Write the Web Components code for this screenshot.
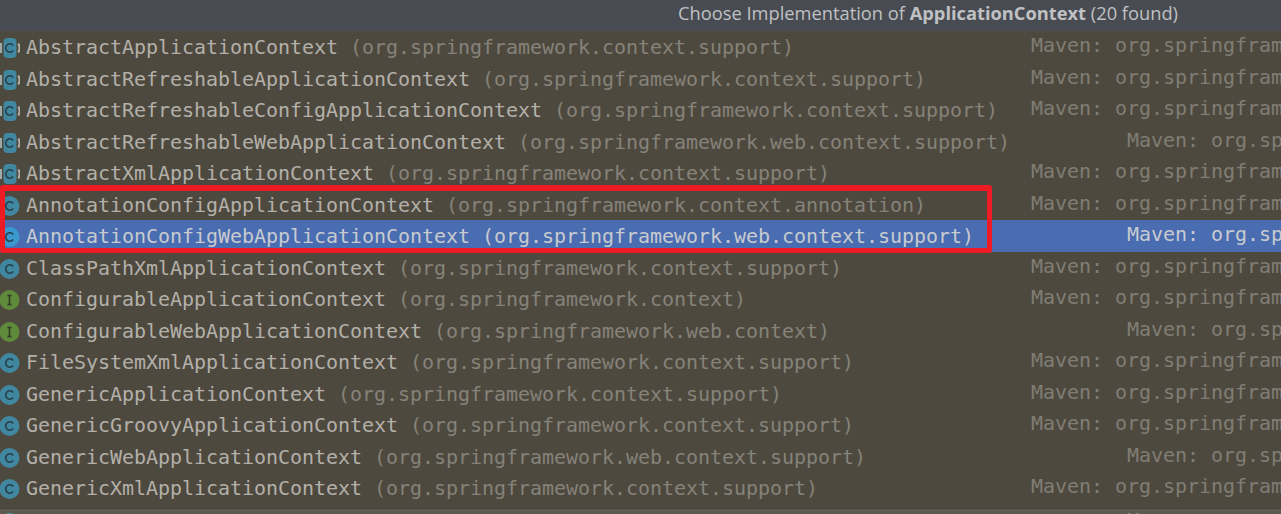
<!DOCTYPE html>
<html><head><meta charset="utf-8"><style>
html,body{margin:0;padding:0;background:#4e493e;overflow:hidden}
body{width:1281px;height:514px}
</style></head><body>
<chooser-popup title-pre="Choose Implementation of " title-bold="ApplicationContext" title-post=" (20 found)"></chooser-popup>
<script>
const ROWS=[
["a","AbstractApplicationContext","org.springframework.context.support",0],
["a","AbstractRefreshableApplicationContext","org.springframework.context.support",0],
["a","AbstractRefreshableConfigApplicationContext","org.springframework.context.support",0],
["a","AbstractRefreshableWebApplicationContext","org.springframework.web.context.support",1],
["a","AbstractXmlApplicationContext","org.springframework.context.support",0],
["c","AnnotationConfigApplicationContext","org.springframework.context.annotation",0],
["c","AnnotationConfigWebApplicationContext","org.springframework.web.context.support",1,true],
["c","ClassPathXmlApplicationContext","org.springframework.context.support",0],
["i","ConfigurableApplicationContext","org.springframework.context",0],
["i","ConfigurableWebApplicationContext","org.springframework.web.context",1],
["c","FileSystemXmlApplicationContext","org.springframework.context.support",0],
["c","GenericApplicationContext","org.springframework.context.support",0],
["c","GenericGroovyApplicationContext","org.springframework.context.support",0],
["c","GenericWebApplicationContext","org.springframework.web.context.support",1],
["c","GenericXmlApplicationContext","org.springframework.context.support",0],
["c","GroovyWebApplicationContext","org.springframework.web.context.support",1]];

class TypeIcon extends HTMLElement{
  connectedCallback(){
    const k=this.getAttribute('kind'), sel=this.hasAttribute('selected');
    const fill=k==='i'?'#5f8a3c':(sel?'#3a9ad0':'#40879f');
    const sh=this.attachShadow({mode:'open'});
    const abs=k==='a'?'<path d="M1 5v10" stroke="#a9b4b6" stroke-width="1.8" fill="none"/><path d="M18.4 5.5a10 10 0 0 1 0 9" stroke="#b7b3aa" stroke-width="2" fill="none"/>':'';
    const shape=k==='a'?`<rect x="3.5" y="0" width="13" height="20" rx="4" fill="${fill}"/>`:`<circle cx="9.5" cy="10" r="10" fill="${fill}"/>`;
    const glyph=k==='i'
      ?'<path d="M7.5 5.5h4M9.5 5.5v9M7.5 14.5h4" stroke="#2e3a22" stroke-width="1.5" fill="none"/>'
      :'<path d="M13.2 7.4a4.2 4.2 0 1 0 0 5.2" stroke="#27404c" stroke-width="1.6" fill="none"/>';
    sh.innerHTML=`<style>:host{display:block;width:20px;height:20px;flex:none;margin-top:2px}svg{display:block}</style><svg width="20" height="20" viewBox="0 0 20 20">${abs}${shape}${glyph}</svg>`;
  }
}
customElements.define('type-icon',TypeIcon);

class ChoiceRow extends HTMLElement{
  static tpl=(()=>{const t=document.createElement('template');t.innerHTML=`<style>
  :host{display:grid;grid-template-columns:1031px 250px;align-items:center;height:31.5px;font:20px/24px "DejaVu Sans Mono",monospace;letter-spacing:-.04px;white-space:pre;color:#b3b0aa}
  :host([selected]){background:#4a6cb0;color:#c7cbd0}
  :host(:last-child){margin-top:2px}
  .l{display:flex;align-items:center;gap:6px;overflow:hidden}
  .n{display:flex;gap:12px}
  .p{color:#85827a}
  :host([selected]) .p{color:#c7cbd0}
  .m{overflow:hidden;color:#807d75;padding-bottom:4px}
  :host([selected]) .m{color:#c7cbd0}
  :host([shift]) .m{padding-left:96px}
  </style><div class="l"><slot name="icon"></slot><div class="n"><span><slot name="name"></slot></span><span class="p"><slot name="pkg"></slot></span></div></div><div class="m"><slot name="maven"></slot></div>`;return t})();
  constructor(){super();this.attachShadow({mode:'open'}).appendChild(ChoiceRow.tpl.content.cloneNode(true))}
}
customElements.define('choice-row',ChoiceRow);

class ChooserPopup extends HTMLElement{
  constructor(){super();
    const sh=this.attachShadow({mode:'open'});
    sh.innerHTML=`<style>
    :host{display:block;width:1281px;height:514px;position:relative;overflow:hidden;background:#4e493e}
    header{height:31px;background:#484b51;color:#bfc1c4;font:18.3px/25px "Open Sans",sans-serif;display:flex;justify-content:flex-end;padding-right:103px;white-space:pre}
    b{font-weight:700}
    .list{padding-top:.25px}
    .frame{position:absolute;left:0;top:185px;width:992px;height:68px;box-sizing:border-box;border:5px solid #ed1c24;border-top-width:6px;border-radius:3px;pointer-events:none}
    .foot{position:absolute;left:0;right:0;top:508px;height:6px;box-sizing:border-box;border-top:1px solid #47433a;background:rgba(208,233,242,.1);background-clip:padding-box}
    </style><header><span></span><b></b><span></span></header><div class="list"></div><div class="foot"></div><div class="frame"></div>`;
    const s=sh.querySelectorAll('header>*');
    s[0].textContent=this.getAttribute('title-pre');s[1].textContent=this.getAttribute('title-bold');s[2].textContent=this.getAttribute('title-post');
    const list=sh.querySelector('.list');
    for(const [k,n,p,sf,sel] of ROWS){
      const r=document.createElement('choice-row');
      if(sf)r.setAttribute('shift','');
      if(sel)r.setAttribute('selected','');
      const ic=document.createElement('type-icon');ic.slot='icon';ic.setAttribute('kind',k);if(sel)ic.setAttribute('selected','');
      const a=document.createElement('span');a.slot='name';a.textContent=n;
      const b=document.createElement('span');b.slot='pkg';b.textContent='('+p+')';
      const m=document.createElement('span');m.slot='maven';m.textContent=sf?'Maven: org.sp':'Maven: org.springfram';
      r.append(ic,a,b,m);list.appendChild(r);
    }
  }
}
customElements.define('chooser-popup',ChooserPopup);
</script></body></html>
